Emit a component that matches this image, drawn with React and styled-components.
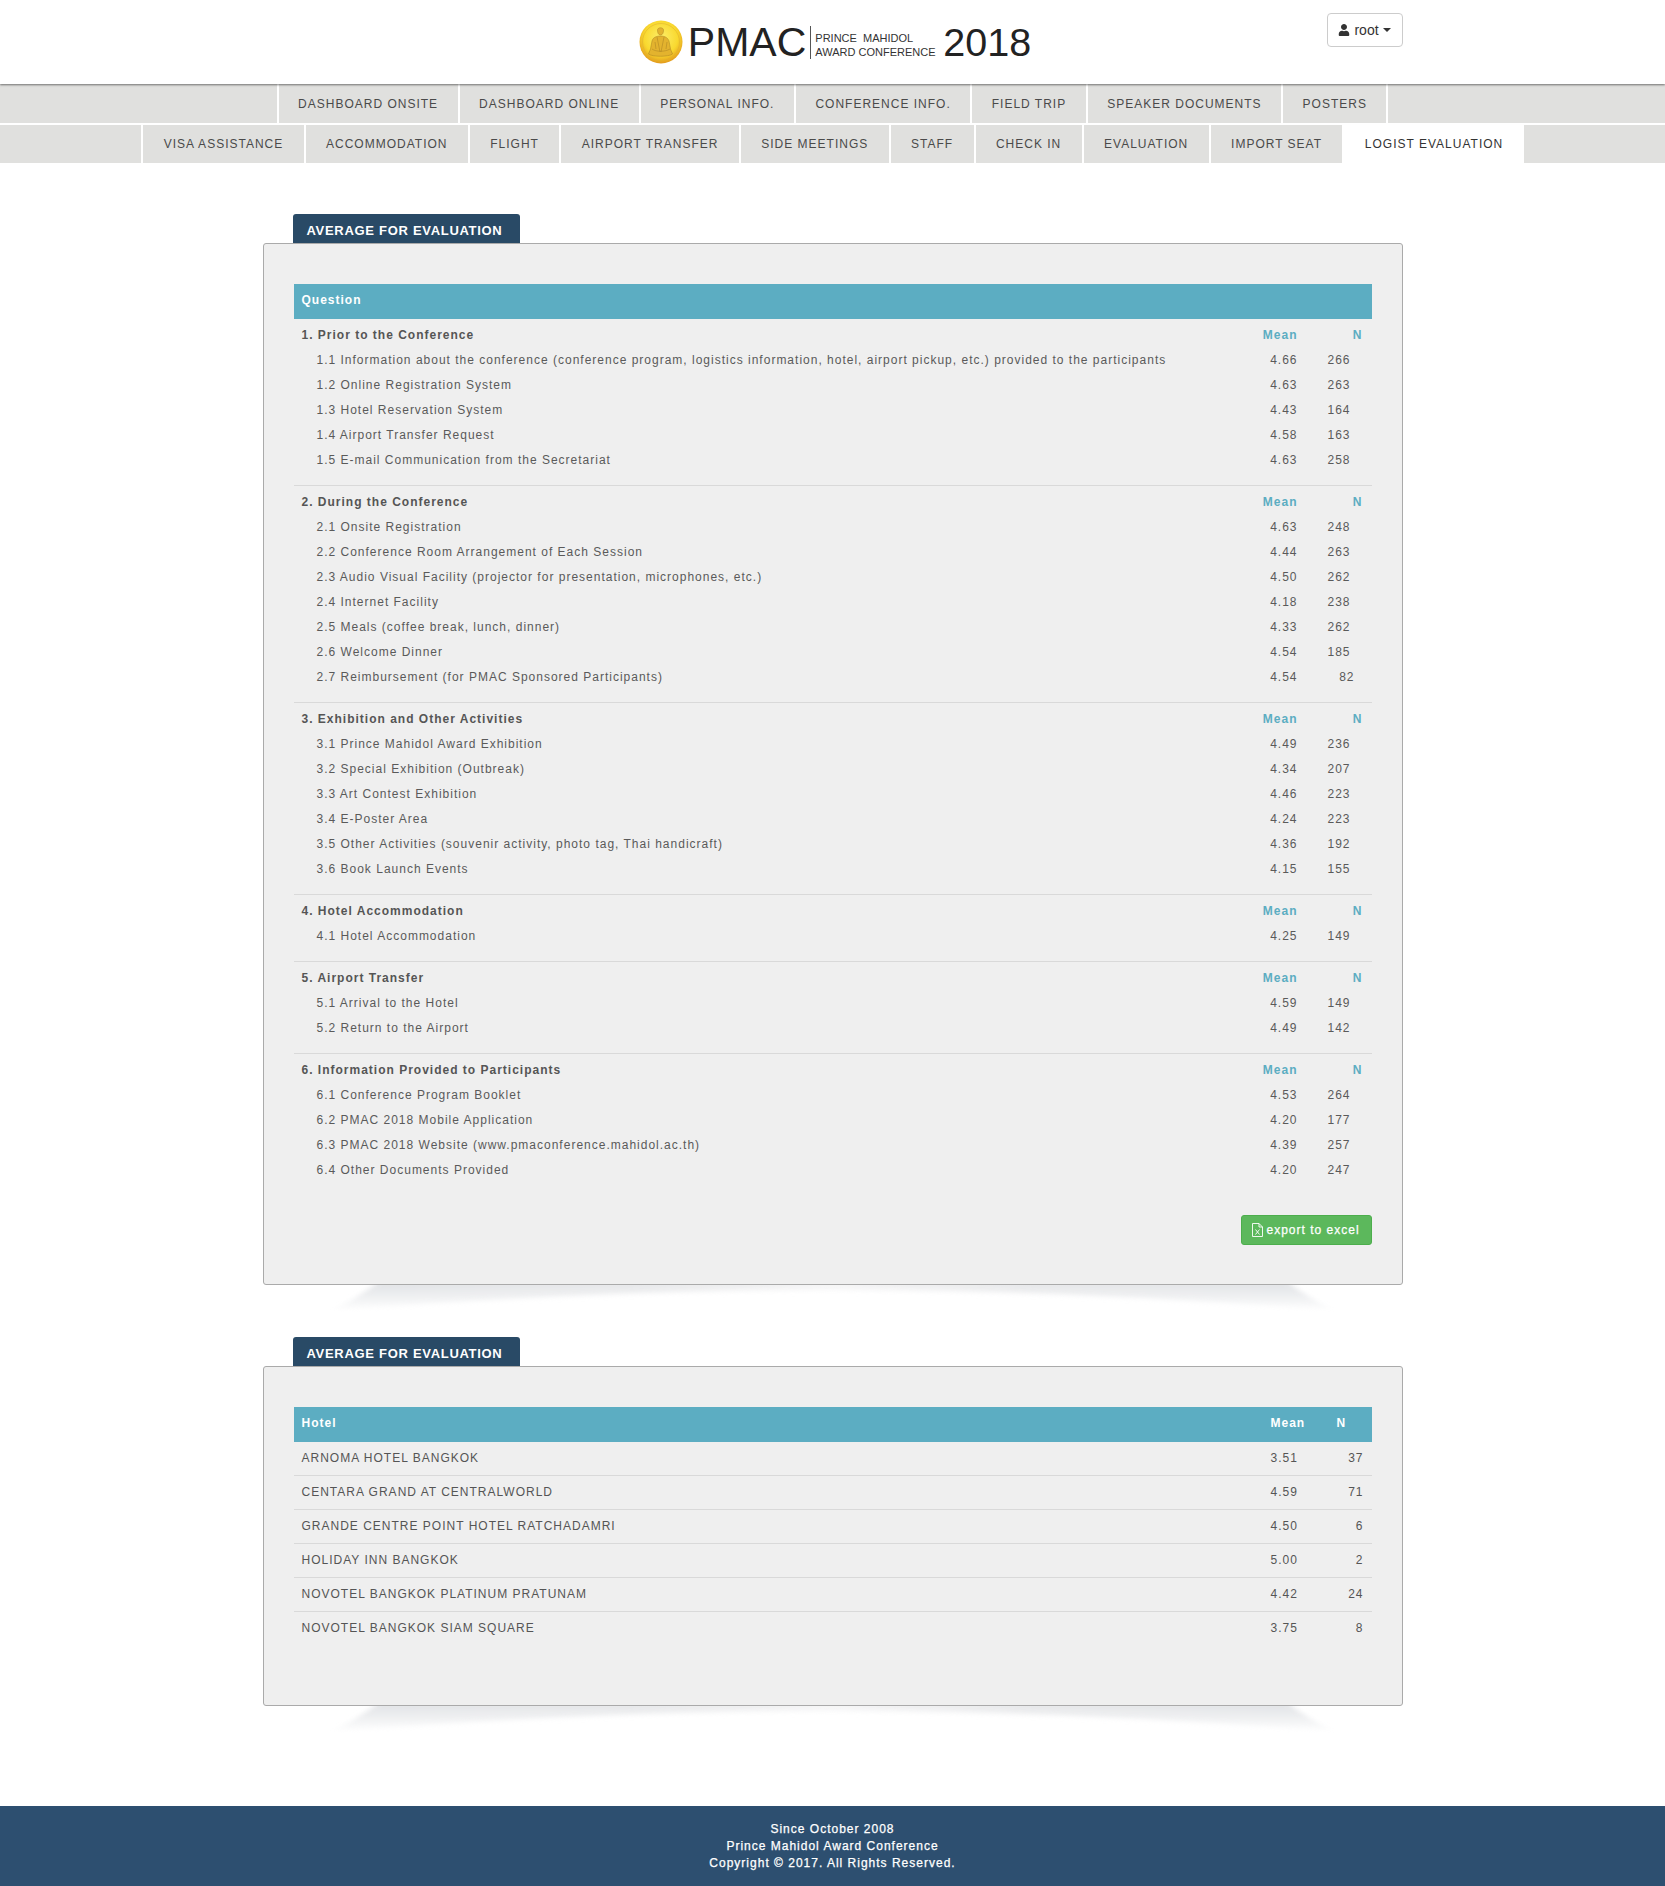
import React from 'react';
import styled, { createGlobalStyle } from 'styled-components';
import { FaUser } from 'react-icons/fa';

const GlobalStyle = createGlobalStyle`
    html, body {
        margin: 0;
        padding: 0;
        background: #fff;
        font-family: "Liberation Sans", Arial, sans-serif;
        color: #555;
    }
`;

const Header = styled.header`
    position: relative;
    z-index: 2;
    height: 84px;
    background: #fff;
    box-shadow: 0 1px 2px rgba(0, 0, 0, 0.5);
`;

const HeaderInner = styled.div`
    width: 1140px;
    height: 84px;
    margin: 0 auto;
    position: relative;
    display: flex;
    justify-content: center;
`;

const Logo = styled.div`
    display: flex;
    align-items: center;
    height: 84px;
    color: #222;
    margin-left: 5px;
`;

const Coin = styled.svg`
    width: 44px;
    height: 44px;
    margin-right: 5px;
`;

const LogoMark = styled.span`
    font-size: 41px;
    line-height: 84px;
`;

const LogoDivider = styled.span`
    width: 1px;
    height: 33px;
    margin: 0 4px 0 4px;
    background: #555;
`;

const LogoCaption = styled.div`
    width: 128px;
    font-size: 11px;
    line-height: 14px;
    white-space: pre;
    color: #333;
    padding-top: 6px;
`;

const LogoYear = styled.span`
    font-size: 39.5px;
    line-height: 84px;
`;

const UserButton = styled.button`
    position: absolute;
    top: 13px;
    right: 0;
    width: 76px;
    height: 34px;
    display: flex;
    align-items: center;
    justify-content: center;
    gap: 4px;
    padding: 0;
    background: #fff;
    border: 1px solid #ccc;
    border-radius: 4px;
    font-family: inherit;
    font-size: 14px;
    color: #333;
`;

const Caret = styled.span`
    width: 0;
    height: 0;
    border-top: 4px solid #333;
    border-left: 4px solid transparent;
    border-right: 4px solid transparent;
`;

const NavBar = styled.nav`
    display: flex;
    justify-content: center;
    height: ${props => props.$height}px;
    background: #e0e0de;
    & + & {
        margin-top: 2px;
    }
`;

const NavTab = styled.a`
    display: flex;
    align-items: center;
    padding: 0 ${props => props.$pad}px;
    border-left: 2px solid #fff;
    font-size: 12px;
    letter-spacing: 1px;
    text-transform: uppercase;
    white-space: nowrap;
    color: ${props => (props.$active ? '#333' : '#4a4a4a')};
    background: ${props => (props.$active ? '#fff' : 'transparent')};
    &:last-child {
        border-right: ${props => (props.$active ? '0' : '2px solid #fff')};
    }
`;

const Main = styled.main`
    width: 1140px;
    margin: 0 auto;
    padding-top: 51px;
`;

const Section = styled.section`
    position: relative;
    margin-bottom: ${props => props.$gap}px;
`;

const SectionTab = styled.div`
    width: 227px;
    height: 29px;
    margin-left: 30px;
    box-sizing: border-box;
    padding-left: 14px;
    border-radius: 3px 3px 0 0;
    background: #294a66;
    color: #fff;
    font-size: 13px;
    font-weight: bold;
    letter-spacing: 0.7px;
    line-height: 33px;
    white-space: nowrap;
`;

const Panel = styled.div`
    position: relative;
    z-index: 1;
    box-sizing: border-box;
    height: ${props => props.$height}px;
    padding: 40px 30px;
    background: #efefef;
    border: 1px solid #aaa;
    border-radius: 3px;
`;

const PanelShadow = styled.svg`
    position: absolute;
    left: 67px;
    bottom: -32px;
    width: 1006px;
    height: 32px;
`;

const TableHead = styled.div`
    display: grid;
    grid-template-columns: ${props => props.$columns};
    box-sizing: border-box;
    height: 35px;
    padding-bottom: 3px;
    align-items: center;
    background: #5cadc2;
    color: #fff;
    font-size: 12px;
    font-weight: bold;
    letter-spacing: 1px;
`;

const HeadCell = styled.div`
    padding-left: ${props => props.$left || 0}px;
`;

const Group = styled.div`
    padding: 3px 0 13px;
    border-bottom: ${props => (props.$last ? '0' : '1px solid #d9d9d9')};
`;

const QuestionRow = styled.div`
    display: grid;
    grid-template-columns: 1fr 52px 74px;
    height: 25px;
    align-items: center;
    font-size: 12px;
    letter-spacing: 1px;
    font-weight: ${props => (props.$title ? 'bold' : 'normal')};
    color: ${props => (props.$title ? '#555' : '#5a5a5a')};
`;

const QuestionLabel = styled.div`
    padding-left: ${props => (props.$title ? 8 : 23)}px;
    white-space: nowrap;
`;

const ScoreCell = styled.div`
    text-align: right;
    padding-right: ${props => props.$pad || 0}px;
    color: ${props => (props.$accent ? '#5cadc2' : 'inherit')};
`;

const ButtonRow = styled.div`
    display: flex;
    justify-content: flex-end;
    margin-top: 20px;
`;

const ExportButton = styled.button`
    width: 131px;
    height: 30px;
    display: flex;
    align-items: center;
    gap: 4px;
    padding: 0 0 0 10px;
    background: #5cb85c;
    border: 1px solid #4cae4c;
    border-radius: 3px;
    color: #fff;
    font-family: inherit;
    font-size: 12px;
    letter-spacing: 1px;
    -webkit-text-stroke: 0.25px #fff;
`;

const ExcelIcon = styled.svg`
    width: 11px;
    height: 14px;
    flex: none;
`;

const HotelRow = styled.div`
    display: grid;
    grid-template-columns: 1fr 66px 35px;
    box-sizing: content-box;
    height: 31px;
    padding-bottom: 2px;
    align-items: center;
    border-bottom: ${props => (props.$last ? '0' : '1px solid #d9d9d9')};
    font-size: 12px;
    letter-spacing: 1px;
`;

const HotelName = styled.div`
    padding-left: 8px;
`;

const HotelCount = styled.div`
    text-align: right;
    padding-right: 8px;
`;

const Footer = styled.footer`
    box-sizing: border-box;
    height: 80px;
    padding-top: 15px;
    background: #2d4f70;
    color: #fff;
    font-size: 12px;
    letter-spacing: 1px;
    line-height: 17px;
    text-align: center;
    -webkit-text-stroke: 0.25px #fff;
`;

const navTop = ['Dashboard Onsite', 'Dashboard Online', 'Personal Info.', 'Conference Info.', 'Field Trip', 'Speaker Documents', 'Posters'];
const navBottom = ['Visa Assistance', 'Accommodation', 'Flight', 'Airport Transfer', 'Side Meetings', 'Staff', 'Check In', 'Evaluation', 'Import Seat', 'Logist Evaluation'];

const questions = [
    {
        title: '1. Prior to the Conference',
        rows: [
            ['1.1 Information about the conference (conference program, logistics information, hotel, airport pickup, etc.) provided to the participants', '4.66', '266'],
            ['1.2 Online Registration System', '4.63', '263'],
            ['1.3 Hotel Reservation System', '4.43', '164'],
            ['1.4 Airport Transfer Request', '4.58', '163'],
            ['1.5 E-mail Communication from the Secretariat', '4.63', '258'],
        ],
    },
    {
        title: '2. During the Conference',
        rows: [
            ['2.1 Onsite Registration', '4.63', '248'],
            ['2.2 Conference Room Arrangement of Each Session', '4.44', '263'],
            ['2.3 Audio Visual Facility (projector for presentation, microphones, etc.)', '4.50', '262'],
            ['2.4 Internet Facility', '4.18', '238'],
            ['2.5 Meals (coffee break, lunch, dinner)', '4.33', '262'],
            ['2.6 Welcome Dinner', '4.54', '185'],
            ['2.7 Reimbursement (for PMAC Sponsored Participants)', '4.54', '82'],
        ],
    },
    {
        title: '3. Exhibition and Other Activities',
        rows: [
            ['3.1 Prince Mahidol Award Exhibition', '4.49', '236'],
            ['3.2 Special Exhibition (Outbreak)', '4.34', '207'],
            ['3.3 Art Contest Exhibition', '4.46', '223'],
            ['3.4 E-Poster Area', '4.24', '223'],
            ['3.5 Other Activities (souvenir activity, photo tag, Thai handicraft)', '4.36', '192'],
            ['3.6 Book Launch Events', '4.15', '155'],
        ],
    },
    {
        title: '4. Hotel Accommodation',
        rows: [['4.1 Hotel Accommodation', '4.25', '149']],
    },
    {
        title: '5. Airport Transfer',
        rows: [
            ['5.1 Arrival to the Hotel', '4.59', '149'],
            ['5.2 Return to the Airport', '4.49', '142'],
        ],
    },
    {
        title: '6. Information Provided to Participants',
        rows: [
            ['6.1 Conference Program Booklet', '4.53', '264'],
            ['6.2 PMAC 2018 Mobile Application', '4.20', '177'],
            ['6.3 PMAC 2018 Website (www.pmaconference.mahidol.ac.th)', '4.39', '257'],
            ['6.4 Other Documents Provided', '4.20', '247'],
        ],
    },
];

const hotels = [
    ['ARNOMA HOTEL BANGKOK', '3.51', '37'],
    ['CENTARA GRAND AT CENTRALWORLD', '4.59', '71'],
    ['GRANDE CENTRE POINT HOTEL RATCHADAMRI', '4.50', '6'],
    ['HOLIDAY INN BANGKOK', '5.00', '2'],
    ['NOVOTEL BANGKOK PLATINUM PRATUNAM', '4.42', '24'],
    ['NOVOTEL BANGKOK SIAM SQUARE', '3.75', '8'],
];

const CoinLogo = () => (
    <Coin viewBox="0 0 44 44">
        <defs>
            <radialGradient id="coinFill" cx="50%" cy="40%" r="60%">
                <stop offset="0%" stopColor="#fdee6a" />
                <stop offset="65%" stopColor="#f9d92f" />
                <stop offset="100%" stopColor="#e29a1c" />
            </radialGradient>
        </defs>
        <circle cx="22" cy="22" r="21.5" fill="url(#coinFill)" />
        <circle cx="22" cy="22" r="18.5" fill="none" stroke="#dcae2c" strokeWidth="0.5" />
        <g fill="#e3b32e" stroke="#a98022" strokeWidth="0.5">
            <path d="M18.5 10c0-3 6-3 6 0 0 3-1 5-3 5s-3-2-3-5z" />
            <path d="M13 21c1-4 5-5 8.500-5s7 1 8.500 5l1.500 8 2 5c-4 3-20 3-24 0l2-5z" />
            <path d="M18 17l3 15M25 17l-3 15M13 29c4 3 13 3 18 0M16 22l1 7M28 22l-1 7" fill="none" />
        </g>
    </Coin>
);

const CrescentShadow = () => (
    <PanelShadow viewBox="0 0 1006 32">
        <defs>
            <linearGradient id="shadowTone" x1="0" x2="1" y1="0" y2="0">
                <stop offset="0" stopColor="#e2e4e7" />
                <stop offset="0.3" stopColor="#e7e8ea" />
                <stop offset="0.5" stopColor="#f5f5f6" />
                <stop offset="0.7" stopColor="#e7e8ea" />
                <stop offset="1" stopColor="#e2e4e7" />
            </linearGradient>
            <linearGradient id="shadowFade" x1="0" x2="0" y1="0" y2="1">
                <stop offset="0" stopColor="#fff" />
                <stop offset="0.3" stopColor="#aaa" />
                <stop offset="0.65" stopColor="#333" />
                <stop offset="0.85" stopColor="#000" />
            </linearGradient>
            <mask id="shadowMask">
                <rect width="1006" height="32" fill="url(#shadowFade)" />
            </mask>
            <filter id="shadowBlur" x="-2%" y="-30%" width="104%" height="160%">
                <feGaussianBlur stdDeviation="2.5" />
            </filter>
        </defs>
        <g mask="url(#shadowMask)">
            <path
                d="M50 -4H956C972 8 988 18 1004 27C800 10 650 6 503 5C356 6 206 10 2 27C18 18 34 8 50 -4Z"
                fill="url(#shadowTone)"
                filter="url(#shadowBlur)"
            />
        </g>
    </PanelShadow>
);

const App = () => (
    <>
        <GlobalStyle />
        <Header>
            <HeaderInner>
                <Logo>
                    <CoinLogo />
                    <LogoMark>PMAC</LogoMark>
                    <LogoDivider />
                    <LogoCaption>{'PRINCE  MAHIDOL\nAWARD CONFERENCE'}</LogoCaption>
                    <LogoYear>2018</LogoYear>
                </Logo>
                <UserButton>
                    <FaUser size={12} />
                    root
                    <Caret />
                </UserButton>
            </HeaderInner>
        </Header>
        <NavBar $height={39}>
            {navTop.map(item => <NavTab key={item} $pad={19.5}>{item}</NavTab>)}
        </NavBar>
        <NavBar $height={38}>
            {navBottom.map((item, i) => (
                <NavTab key={item} $pad={20.4} $active={i === navBottom.length - 1}>{item}</NavTab>
            ))}
        </NavBar>
        <Main>
            <Section $gap={52}>
                <SectionTab>AVERAGE FOR EVALUATION</SectionTab>
                <Panel $height={1042}>
                    <TableHead $columns="1fr">
                        <HeadCell $left={8}>Question</HeadCell>
                    </TableHead>
                    {questions.map((group, i) => (
                        <Group key={group.title} $last={i === questions.length - 1}>
                            <QuestionRow $title>
                                <QuestionLabel $title>{group.title}</QuestionLabel>
                                <ScoreCell $accent>Mean</ScoreCell>
                                <ScoreCell $accent $pad={9}>N</ScoreCell>
                            </QuestionRow>
                            {group.rows.map(row => (
                                <QuestionRow key={row[0]}>
                                    <QuestionLabel>{row[0]}</QuestionLabel>
                                    <ScoreCell>{row[1]}</ScoreCell>
                                    <ScoreCell $pad={row[2].length < 3 ? 17 : 21}>{row[2]}</ScoreCell>
                                </QuestionRow>
                            ))}
                        </Group>
                    ))}
                    <ButtonRow>
                        <ExportButton>
                            <ExcelIcon viewBox="0 0 11 14">
                                <path d="M0.5 0.5H7L10.500 4V13.500H0.500ZM7 0.500V4H10.500" fill="none" stroke="#fff" strokeWidth="0.9" />
                                <path d="M3.500 6.500L7.500 11.500M7.500 6.500L3.500 11.500" fill="none" stroke="#fff" strokeWidth="0.9" />
                            </ExcelIcon>
                            export to excel
                        </ExportButton>
                    </ButtonRow>
                </Panel>
                <CrescentShadow />
            </Section>
            <Section $gap={100}>
                <SectionTab>AVERAGE FOR EVALUATION</SectionTab>
                <Panel $height={340}>
                    <TableHead $columns="1fr 66px 35px">
                        <HeadCell $left={8}>Hotel</HeadCell>
                        <HeadCell>Mean</HeadCell>
                        <HeadCell>N</HeadCell>
                    </TableHead>
                    {hotels.map((hotel, i) => (
                        <HotelRow key={hotel[0]} $last={i === hotels.length - 1}>
                            <HotelName>{hotel[0]}</HotelName>
                            <div>{hotel[1]}</div>
                            <HotelCount>{hotel[2]}</HotelCount>
                        </HotelRow>
                    ))}
                </Panel>
                <CrescentShadow />
            </Section>
        </Main>
        <Footer>
            <div>Since October 2008</div>
            <div>Prince Mahidol Award Conference</div>
            <div>Copyright © 2017. All Rights Reserved.</div>
        </Footer>
    </>
);

export default App;
